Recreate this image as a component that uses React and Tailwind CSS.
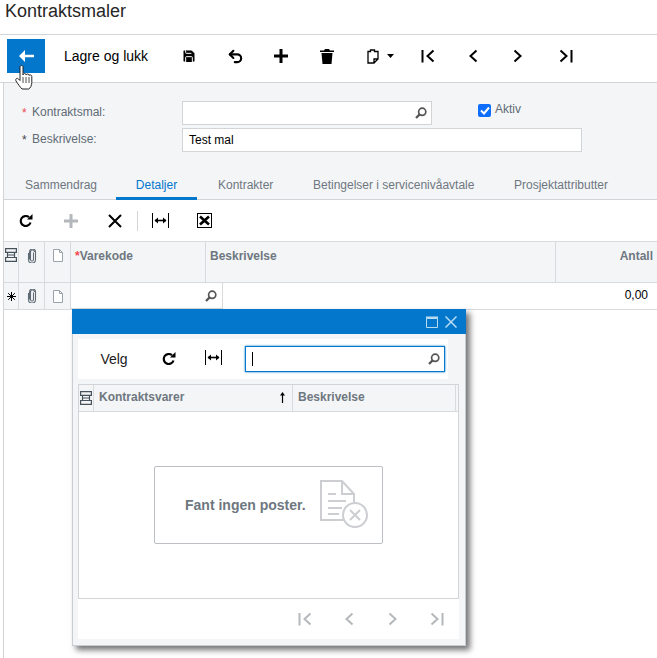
import { Save, Undo2 } from 'lucide-react'

const font = { fontFamily: '"Liberation Sans", Arial, sans-serif' }

function SearchIcon({ className = '' }) {
  return (
    <svg width="12" height="12" viewBox="0 0 12 12" className={className} fill="none" stroke="#555" strokeWidth="1.7">
      <circle cx="7.2" cy="4.8" r="3.6" />
      <path d="M4.6 7.4 1 11" strokeWidth="2.2" />
    </svg>
  )
}

function FirstIcon({ color = '#000' }) {
  return (
    <svg width="14" height="14" viewBox="0 0 14 14" fill="none" stroke={color} strokeWidth="2">
      <path d="M1.5 1v12.500M12.500 1.500 6.500 7l6 5.500" />
    </svg>
  )
}

function PrevIcon({ color = '#000' }) {
  return (
    <svg width="10" height="14" viewBox="0 0 10 14" fill="none" stroke={color} strokeWidth="2">
      <path d="M8.500 1.500 2.500 7l6 5.500" />
    </svg>
  )
}

function NextIcon({ color = '#000' }) {
  return (
    <svg width="10" height="14" viewBox="0 0 10 14" fill="none" stroke={color} strokeWidth="2">
      <path d="M1.500 1.500 7.500 7l-6 5.500" />
    </svg>
  )
}

function LastIcon({ color = '#000' }) {
  return (
    <svg width="14" height="14" viewBox="0 0 14 14" fill="none" stroke={color} strokeWidth="2">
      <path d="M12.500 1v12.500M1.500 1.500 7.500 7l-6 5.500" />
    </svg>
  )
}

function FitIcon() {
  return (
    <svg width="17" height="15" viewBox="0 0 17 15" fill="none" stroke="#000">
      <path d="M.5 0v15M16.500 0v15" />
      <path d="M3 7.500h11" strokeWidth="1.600" />
      <path d="M6 4.500v6L2.500 7.500zM11 4.500v6l3.500-3z" fill="#000" stroke="none" />
    </svg>
  )
}

function RefreshIcon() {
  return (
    <svg width="14" height="14" viewBox="0 0 14 14" fill="none">
      <path d="M11.500 8.500A5 5 0 1 1 10 3.200" stroke="#000" strokeWidth="2.200" />
      <path d="M8 5.500h5.500V0z" fill="#000" />
    </svg>
  )
}

function PaperclipIcon() {
  return (
    <svg width="10" height="14" viewBox="0 0 10 14" fill="none" stroke="#5f6b75" strokeWidth="1.100">
      <path d="M6.500 3.500v7a1.500 1.500 0 0 1-3 0V3a2 2 0 0 1 4 0 0 0 0 1 0 0" />
      <path d="M1.500 4v6.500a3.500 3.500 0 0 0 7 0V3a3 3 0 0 0-6 0v7.500" />
    </svg>
  )
}

function NoteIcon() {
  return (
    <svg width="12" height="13" viewBox="0 0 12 13" fill="#fff" stroke="#9aa3ab">
      <path d="M1.500.5h6l3 3v9h-9zM7.500.5v3h3" />
    </svg>
  )
}

function RowsIcon() {
  return (
    <svg width="12" height="14" viewBox="0 0 12 14" fill="none" stroke="#46525c" strokeWidth="1.200">
      <path d="M.6.600h10.800v3.800H.6zM.6 9.500h10.800v3.900H.6zM2.500 4.500v5M9.500 4.500v5M3 7h6" />
    </svg>
  )
}

function HandCursor() {
  return (
    <svg width="19" height="25" viewBox="0 0 19 25" className="absolute left-[15px] top-[65px]">
      <path
        d="M5 2c0-2 3-2 3 0v8c.5-2 3-2 3 0 .5-1.500 3-1.500 3 .5.500-1 2.800-.8 2.800 1v6c0 3-1.500 5.500-3 6.500H7C5 22 3 19 1 16c-1-2 1-3.500 2.500-2L5 15.500z"
        fill="#fff"
        stroke="#222"
        strokeWidth="1"
      />
      <path d="M8 12v6M11 12v6M14 12v6" stroke="#222" strokeWidth=".8" />
    </svg>
  )
}

function TopButton({ children, className = 'w-[46px]' }) {
  return <div className={`flex items-center justify-center h-[34px] ${className}`}>{children}</div>
}

export default function App() {
  return (
    <div style={font} className="relative w-[657px] h-[658px] overflow-hidden bg-white text-black">
      <div className="h-[34px] pl-[5px] text-[18px] leading-[23px] text-[#262626]">Kontraktsmaler</div>

      {/* Main toolbar */}
      <div className="h-[49px] border-y border-[#d2d4d7] flex items-start pt-1 pl-[7px]">
        <div className="w-[38px] h-[34px] bg-[#0277cc] flex items-center justify-center">
          <svg width="15" height="12" viewBox="0 0 15 12" fill="#fff">
            <path d="M6 0v4.700h9v2.600H6V12L0 6z" />
          </svg>
        </div>
        <div className="w-[121px] h-[34px] pl-[19px] text-[14px] leading-[34px]">Lagre og lukk</div>
        <TopButton><Save size={16} fill="#000" stroke="#fff" strokeWidth={1.500} /></TopButton>
        <TopButton><Undo2 size={17} strokeWidth={3} /></TopButton>
        <TopButton>
          <svg width="14" height="14" viewBox="0 0 14 14" fill="#000"><path d="M5.500 0h3v5.500H14v3H8.500V14h-3V8.500H0v-3h5.500z" /></svg>
        </TopButton>
        <TopButton>
          <svg width="14" height="15" viewBox="0 0 14 15" fill="#000"><path d="M5 0h4l1 1.500h4v1.500H0V1.500h4zM1.500 4h11l-1 11h-9z" /></svg>
        </TopButton>
        <TopButton className="w-[55px] pl-[5px] gap-2">
          <svg width="12" height="15" viewBox="0 0 12 15" fill="#fff" stroke="#000" strokeWidth="1.300">
            <path d="M1 2.500h2.500V1h4v1.500H11V10l-4 4H1zM7 14v-4h4" />
          </svg>
          <svg width="7" height="4" viewBox="0 0 7 4" fill="#000"><path d="M0 0h7L3.500 4z" /></svg>
        </TopButton>
        <TopButton><FirstIcon /></TopButton>
        <TopButton className="w-[44px]"><PrevIcon /></TopButton>
        <TopButton><NextIcon /></TopButton>
        <TopButton className="w-[50px]"><LastIcon /></TopButton>
      </div>

      <div className="ml-[3px] border-l border-[#d2d4d7] h-[575px]">
        {/* Form */}
        <div className="h-[117px] bg-[#f4f5f7] border-b border-[#d2d4d7] relative">
          <div className="pl-[18px] pt-[18px] text-[12px] text-[#5f6b75]">
            <div className="flex items-center h-[24px]">
              <span className="w-[10px] text-[#f0494f]">*</span>
              <span className="w-[150px] -mt-[3px]">Kontraktsmal:</span>
              <div className="w-[250px] h-[24px] bg-white border border-[#d2d4d7] flex items-center justify-end pr-1">
                <SearchIcon />
              </div>
              <div className="ml-[46px] flex items-center gap-1 -mt-[6px]">
                <span className="w-[13px] h-[13px] rounded-[2px] bg-[#0d6efd] flex items-center justify-center">
                  <svg width="10" height="9" viewBox="0 0 10 9" fill="none" stroke="#fff" strokeWidth="2"><path d="M1 4.500 4 7.500 9 1.500" /></svg>
                </span>
                <span className="-mt-[2px]">Aktiv</span>
              </div>
            </div>
            <div className="flex items-center h-[24px] mt-[3px]">
              <span className="w-[10px] text-[#444]">*</span>
              <span className="w-[150px] -mt-[3px]">Beskrivelse:</span>
              <div className="w-[400px] h-[24px] bg-white border border-[#d2d4d7] pl-[6px] leading-[22px] text-black">Test mal</div>
            </div>
          </div>
          {/* Tabs */}
          <div className="flex absolute left-0 bottom-[-1px] h-[28px] text-[12px] text-[#6e7780]">
            <div className="w-[112px] pl-[21px] leading-[26px]">Sammendrag</div>
            <div className="w-[81px] text-center leading-[26px] text-[#0277cc] border-b-[3px] border-[#0277cc]">Detaljer</div>
            <div className="w-[95px] pl-[21px] leading-[26px]">Kontrakter</div>
            <div className="w-[201px] pl-[21px] leading-[26px]">Betingelser i servicenivåavtale</div>
            <div className="pl-[21px] leading-[26px]">Prosjektattributter</div>
          </div>
        </div>

        {/* Grid toolbar */}
        <div className="h-[41px] flex items-center">
          <div className="w-[44px] flex justify-center"><RefreshIcon /></div>
          <div className="w-[45px] flex justify-center">
            <svg width="14" height="14" viewBox="0 0 14 14" fill="#b4b8bc"><path d="M5.500 0h3v5.500H14v3H8.500V14h-3V8.500H0v-3h5.500z" /></svg>
          </div>
          <div className="w-[44px] flex justify-center">
            <svg width="14" height="14" viewBox="0 0 14 14" fill="none" stroke="#000" strokeWidth="2"><path d="M1 1l12 12M13 1 1 13" /></svg>
          </div>
          <div className="w-px h-[20px] bg-[#d2d4d7]" />
          <div className="w-[44px] flex justify-center"><FitIcon /></div>
          <div className="w-[45px] flex justify-center">
            <svg width="15" height="15" viewBox="0 0 15 15" fill="none">
              <rect x=".5" y=".5" width="14" height="14" stroke="#000" />
              <path d="M3 3.500 12 11.500M12 3.500 3 11.500" stroke="#000" strokeWidth="2.600" />
            </svg>
          </div>
        </div>

        {/* Grid */}
        <div className="h-[42px] flex bg-[#f4f5f7] border-y border-[#d8dadd] text-[12px] font-bold text-[#6e7780]">
          <div className="w-[15px] border-r border-[#d8dadd] flex justify-center pt-[6px]"><RowsIcon /></div>
          <div className="w-[26px] border-r border-[#d8dadd] flex justify-center pt-[7px]"><PaperclipIcon /></div>
          <div className="w-[26px] border-r border-[#d8dadd] flex justify-center pt-[7px]"><NoteIcon /></div>
          <div className="w-[135px] border-r border-[#d8dadd] pl-[4px] pt-[5px]"><span className="text-[#f0494f]">*</span>Varekode</div>
          <div className="w-[350px] border-r border-[#d8dadd] pl-[4px] pt-[5px]">Beskrivelse</div>
          <div className="flex-1 text-right pr-[4px] pt-[5px]">Antall</div>
        </div>
        <div className="h-[27px] flex border-b border-[#d8dadd] text-[12px]">
          <div className="w-[15px] bg-[#f4f5f7] border-r border-[#d8dadd] flex items-center justify-center">
            <svg width="9" height="9" viewBox="0 0 9 9" stroke="#000"><path d="M4.500 0v9M0 4.500h9M1.200 1.200l6.600 6.600M7.800 1.200 1.200 7.800" /></svg>
          </div>
          <div className="w-[26px] bg-[#f4f5f7] border-r border-[#d8dadd] flex items-center justify-center"><PaperclipIcon /></div>
          <div className="w-[26px] bg-[#f4f5f7] border-r border-[#d8dadd] flex items-center justify-center"><NoteIcon /></div>
          <div className="w-[152px] border-r border-b border-[#d8dadd] flex items-center justify-end pr-[5px]"><SearchIcon /></div>
          <div className="flex-1 text-right pr-[9px] leading-[25px]">0,00</div>
        </div>
      </div>

      {/* Lookup dialog */}
      <div className="absolute left-[72px] top-[309px] w-[394px] h-[337px] bg-[#f4f5f7] border-x border-b border-[#c9ccd0] shadow-[4px_4px_6px_rgba(0,0,0,0.55)]">
        <div className="h-[25px] bg-[#0277cc] flex items-center justify-end gap-[7px] pr-[9px] -mx-px">
          <svg width="12" height="12" viewBox="0 0 12 12" fill="none" stroke="#b9dcf4"><path d="M.5 2.500h11v9H.5z" /><path d="M0 1.500h12" strokeWidth="2" /></svg>
          <svg width="12" height="12" viewBox="0 0 12 12" fill="none" stroke="#b9dcf4" strokeWidth="1.500"><path d="M.5.500l11 11M11.500.500l-11 11" /></svg>
        </div>
        <div className="ml-[5px] mt-[5px] w-[370px] h-[40px] bg-white flex items-center relative">
          <div className="w-[75px] text-center text-[14px] text-[#222] pr-[3px]">Velg</div>
          <div className="w-[38px] flex justify-center -ml-[3px]"><RefreshIcon /></div>
          <div className="w-[50px] flex justify-center -mt-[3px]"><FitIcon /></div>
          <div className="ml-[7px] w-[200px] h-[26px] border border-[#0277cc] shadow-[0_0_2px_#0277cc] flex items-center justify-between pl-[6px] pr-[4px]">
            <span className="w-px h-[14px] bg-black" />
            <SearchIcon />
          </div>
        </div>
        <div className="ml-[5px] mt-[5px] w-[381px] h-[215px] bg-white border border-[#d2d4d7] flex flex-col items-center">
          <div className="w-full h-[27px] shrink-0 flex bg-[#f4f5f7] border-b border-[#d8dadd] text-[12px] font-bold text-[#6e7780] leading-[24px]">
            <div className="w-[15px] border-r border-[#d8dadd] flex justify-center items-center"><RowsIcon /></div>
            <div className="w-[199px] border-r border-[#d8dadd] pl-[5px] flex justify-between pr-[6px]">
              Kontraktsvarer
              <svg width="7" height="24" viewBox="0 0 7 24" stroke="#000" fill="#000"><path d="M3.500 9v9" strokeWidth="1.200" /><path d="M1 10.500 3.500 7 6 10.500z" stroke="none" /></svg>
            </div>
            <div className="w-[163px] border-r border-[#d8dadd] pl-[5px]">Beskrivelse</div>
          </div>
          <div className="mt-[54px] w-[229px] h-[78px] border border-[#bcbfc3] rounded-[2px] flex items-center pl-[30px] gap-[14px]">
            <span className="text-[14px] font-bold text-[#6e7780]">Fant ingen poster.</span>
            <svg width="49" height="50" viewBox="0 0 49 50" fill="none" stroke="#ccced1" strokeWidth="2">
              <path d="M26 40H1V1h21l12 13v8M22 1v13h12" />
              <path d="M8 14h8M8 21h18M8 28h14M8 34h11" />
              <circle cx="35" cy="35" r="12" fill="#fff" />
              <path d="M30 30l10 10M40 30 30 40" />
            </svg>
          </div>
        </div>
        <div className="ml-[5px] w-[381px] h-[40px] bg-white flex items-center">
          <div className="w-[205px]" />
          <div className="w-[44px] flex justify-center"><FirstIcon color="#b4b8bc" /></div>
          <div className="w-[43px] flex justify-center"><PrevIcon color="#b4b8bc" /></div>
          <div className="w-[45px] flex justify-center"><NextIcon color="#b4b8bc" /></div>
          <div className="w-[44px] flex justify-center"><LastIcon color="#b4b8bc" /></div>
        </div>
      </div>

      <HandCursor />
    </div>
  )
}
